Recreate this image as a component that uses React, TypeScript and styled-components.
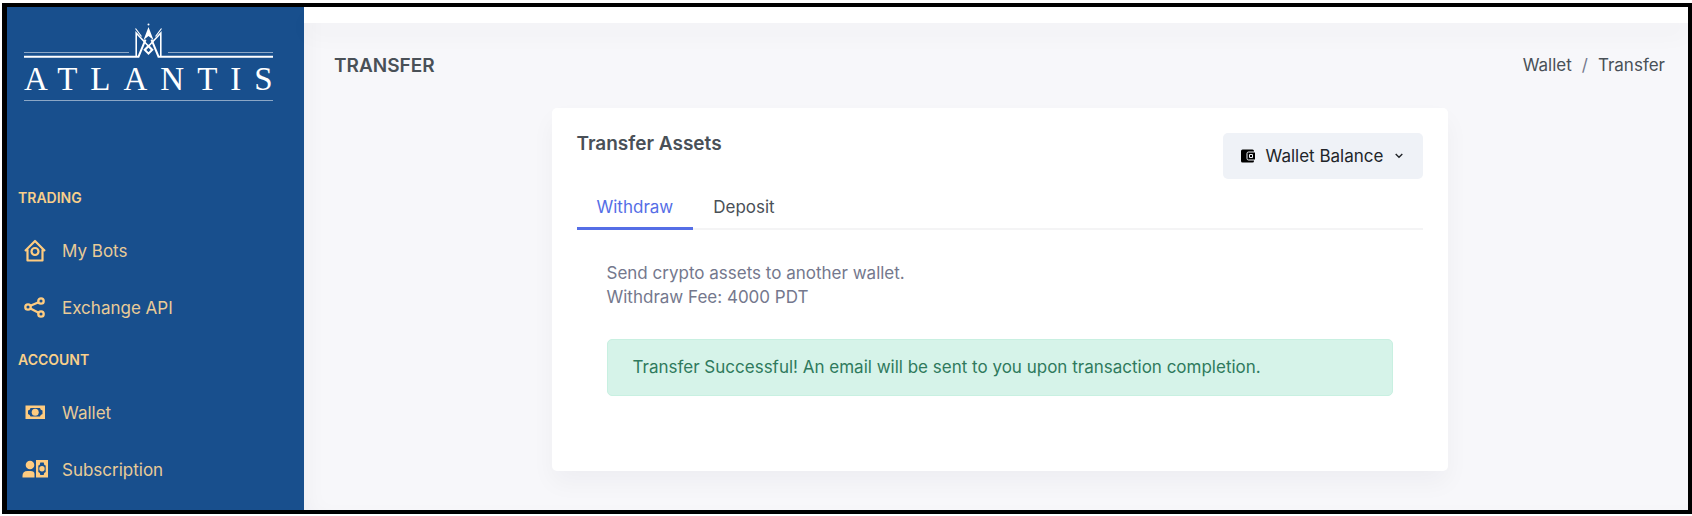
import React, { useState } from "react";
import styled, { createGlobalStyle } from "styled-components";

const GlobalStyle = createGlobalStyle`
  * { box-sizing: border-box; }
  body { margin: 0; background: #fff; font-family: Inter, "Noto Sans", sans-serif; }
`;

const Frame = styled.div`
  display: flex;
  min-height: calc(100vh - 5px);
  margin: 3px 0 2px 2px;
  border: 4px solid #000;
  border-left-width: 5px;
  overflow: hidden;
`;

const Sidebar = styled.aside`
  flex: 0 0 297px;
  padding: 15px 0 0;
  background: #184f8d;
  color: #f9cf8a;
`;

const Brand = styled.a`
  display: block;
  width: 249px;
  height: 79px;
  margin: 0 0 73px 17px;
  border-bottom: 1px solid #8ba7c6;
  color: #fff;
  text-decoration: none;
`;

const Crown = styled.svg`
  display: block;
`;

const BrandName = styled.span`
  display: block;
  font: 33px/42px "Liberation Serif", serif;
  letter-spacing: 13px;
  white-space: nowrap;
`;

const GroupTitle = styled.h2`
  margin: 0;
  padding-left: 11px;
  font-size: 14px;
  font-weight: 600;
  line-height: 48px;
`;

const NavList = styled.ul`
  margin: 0;
  padding: 0;
  list-style: none;
`;

const NavLink = styled.a`
  display: flex;
  align-items: center;
  gap: 13px;
  height: 57px;
  padding-left: 14px;
  color: #e9cb97;
  font-size: 17px;
  text-decoration: none;

  svg { color: #ffcc80; flex: none; }
`;

const Main = styled.main`
  flex: 1;
  min-width: 0;
  background: #f7f7fa;
  box-shadow: inset 12px 0 24px -12px rgba(18, 38, 63, 0.05);
`;

const TopBar = styled.div`
  height: 16px;
  background: #fff;
  box-shadow: 0 12px 24px rgba(18, 38, 63, 0.03);
`;

const Content = styled.div`
  padding: 29px 23px 39px 30px;
`;

const PageHeader = styled.header`
  display: flex;
  align-items: center;
  justify-content: space-between;
  height: 26px;
  margin-bottom: 30px;
  color: #495057;
`;

const PageTitle = styled.h1`
  margin: 0;
  font-size: 19px;
  font-weight: 600;
`;

const Crumbs = styled.nav`
  display: flex;
  gap: 10px;
  font-size: 17px;

  a { color: inherit; text-decoration: none; }
`;

const Slash = styled.span`
  color: #74788d;
`;

const Card = styled.section`
  max-width: 896px;
  min-height: 363px;
  margin: 0 auto;
  padding: 25px;
  border-radius: 5px;
  background: #fff;
  box-shadow: 0 12px 24px rgba(18, 38, 63, 0.04);
`;

const CardHeader = styled.div`
  display: flex;
  align-items: flex-start;
  justify-content: space-between;
  height: 46px;
`;

const CardTitle = styled.h2`
  margin: 0;
  color: #495057;
  font-size: 19px;
  font-weight: 600;
  line-height: 22px;
`;

const BalanceButton = styled.button`
  display: flex;
  align-items: center;
  width: 200px;
  height: 46px;
  padding: 0 20px 0 18px;
  border: 0;
  border-radius: 5px;
  background: #eff2f7;
  color: #212529;
  font: 17px Inter, sans-serif;
  white-space: nowrap;
`;

const ButtonText = styled.span`
  flex: 1;
  text-align: center;
`;

const Tabs = styled.div`
  display: flex;
  height: 51px;
  border-bottom: 2px solid #f4f4f5;
`;

const Tab = styled.button<{ $active: boolean }>`
  height: 51px;
  padding: 7px 20px 0;
  border: 0;
  border-bottom: 3px solid ${(p) => (p.$active ? "#556ee6" : "transparent")};
  background: none;
  color: ${(p) => (p.$active ? "#556ee6" : "#495057")};
  font: 17px Inter, sans-serif;
`;

const Panel = styled.div`
  padding: 31px 30px 0;
`;

const Note = styled.p`
  margin: 0 0 30px;
  color: #74788d;
  font-size: 17px;
  line-height: 24px;
`;

const Alert = styled.div`
  padding: 15px 25px;
  border: 1px solid #c8f0e1;
  border-radius: 5px;
  background: #d6f3e9;
  color: #2f7a5d;
  font-size: 17px;
  line-height: 25px;
`;

const HomeIcon = () => (
  <svg width="28" height="24" viewBox="0 0 28 24" fill="none" stroke="currentColor" strokeWidth="2.200" strokeLinejoin="round">
    <path d="M4 12 14 2l10 10M6.500 10.500V21.500h15V10.500" />
    <circle cx="14" cy="12.500" r="3.500" />
  </svg>
);

const ShareIcon = () => (
  <svg width="28" height="24" viewBox="0 0 28 24" fill="none" stroke="currentColor" strokeWidth="2.300">
    <circle cx="7" cy="11" r="2.700" />
    <circle cx="20" cy="5" r="2.700" />
    <circle cx="20" cy="18" r="2.700" />
    <path d="M9.400 9.800 17.600 6.200M9.400 12.400l8.200 4.300" />
  </svg>
);

const MoneyIcon = () => (
  <svg width="28" height="24" viewBox="0 0 28 24" fill="currentColor">
    <path fillRule="evenodd" d="M4.500 4.500h19.500v13.500h-19.500zM9.500 7q-.3 2-2.500 2.500v3.500q2.200.5 2.500 2.500h9.500q.3-2 2.500-2.500V9.500q-2.200-.5-2.500-2.500z" />
    <circle cx="14.200" cy="11.250" r="3.500" />
  </svg>
);

const UserMoneyIcon = () => (
  <svg width="28" height="24" viewBox="0 0 28 24" fill="currentColor">
    <circle cx="9" cy="7" r="4.300" />
    <path d="M1.500 19.500v-1.500q0-5 5-5h3q4 0 4 3v3.500z" />
    <path fillRule="evenodd" d="M15 2h12v17.500H15zM19.300 4.500q0 2.500-2 3v6.500q2 .5 2 3h3.400q0-2.500 2-3V7.500q-2-.5-2-3z" />
    <circle cx="21" cy="10.700" r="2.700" />
  </svg>
);

const WalletIcon = () => (
  <svg width="14" height="14" viewBox="0 0 14 14">
    <path fill="#000" d="M1.500.5h10q1.500 0 1.500 1.500v10q0 1.500-1.500 1.500h-10Q0 13.500 0 12V2Q0 .5 1.500.5z" />
    <path fill="#000" stroke="#eff2f7" d="M14 3H7.500Q6 3 6 4.500v5Q6 11 7.500 11H14" />
    <path fill="none" stroke="#eff2f7" d="M8.500 5.500h3v3h-3z" />
  </svg>
);

const ChevronIcon = () => (
  <svg width="8" height="6" viewBox="0 0 8 6" fill="none" stroke="#212529" strokeWidth="1.400">
    <path d="m.7 1 3.300 3.300L7.300 1" />
  </svg>
);

const groups = [
  { title: "TRADING", items: [["My Bots", HomeIcon], ["Exchange API", ShareIcon]] },
  { title: "ACCOUNT", items: [["Wallet", MoneyIcon], ["Subscription", UserMoneyIcon]] },
] as { title: string; items: [string, React.FC][] }[];

export default function App() {
  const [tab, setTab] = useState("Withdraw");
  return (
    <>
      <GlobalStyle />
      <Frame>
        <Sidebar>
          <Brand href="#">
            <Crown width="249" height="36" viewBox="0 0 249 36" fill="none" stroke="#fff" aria-hidden="true">
              <path strokeOpacity=".5" d="M0 30.500h105M144 30.500h105" />
              <path strokeWidth="2" d="M0 34.700h114.500l7-17M249 34.700H134.500l-7-17" />
              <path strokeWidth="1.600" d="M112.200 34V11L128 28M136.800 34V11L121 28" />
              <path strokeWidth="1.200" d="M111.500 6.500l6 8M137.500 6.500l-6 8" />
              <path fill="#fff" stroke="none" d="m124.500 5 5 13-5-4-5 4z" />
              <path strokeWidth="2" d="m124.500 24 3.800 3.800-3.800 3.800-3.800-3.800z" />
              <circle cx="124.500" cy="2.500" r="1" fill="#fff" stroke="none" />
            </Crown>
            <BrandName>ATLANTIS</BrandName>
          </Brand>
          <nav aria-label="Main menu">
            {groups.map((g) => (
              <section key={g.title}>
                <GroupTitle>{g.title}</GroupTitle>
                <NavList>
                  {g.items.map(([label, Icon]) => (
                    <li key={label}>
                      <NavLink href="#"><Icon />{label}</NavLink>
                    </li>
                  ))}
                </NavList>
              </section>
            ))}
          </nav>
        </Sidebar>
        <Main>
          <TopBar />
          <Content>
            <PageHeader>
              <PageTitle>TRANSFER</PageTitle>
              <Crumbs aria-label="Breadcrumb">
                <a href="#">Wallet</a>
                <Slash>/</Slash>
                <span>Transfer</span>
              </Crumbs>
            </PageHeader>
            <Card>
              <CardHeader>
                <CardTitle>Transfer Assets</CardTitle>
                <BalanceButton type="button">
                  <WalletIcon />
                  <ButtonText>Wallet Balance</ButtonText>
                  <ChevronIcon />
                </BalanceButton>
              </CardHeader>
              <Tabs role="tablist">
                {["Withdraw", "Deposit"].map((t) => (
                  <Tab key={t} type="button" role="tab" aria-selected={tab === t} $active={tab === t} onClick={() => setTab(t)}>
                    {t}
                  </Tab>
                ))}
              </Tabs>
              <Panel role="tabpanel">
                <Note>
                  Send crypto assets to another wallet.
                  <br />
                  Withdraw Fee: 4000 PDT
                </Note>
                <Alert role="status">Transfer Successful! An email will be sent to you upon transaction completion.</Alert>
              </Panel>
            </Card>
          </Content>
        </Main>
      </Frame>
    </>
  );
}
